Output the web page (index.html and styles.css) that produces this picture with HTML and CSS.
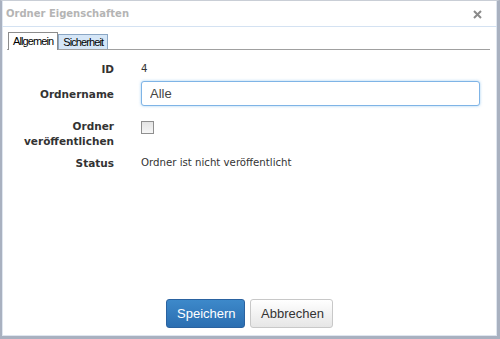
FILE: index.html
```html
<!DOCTYPE html>
<html lang="de">
<head>
    <meta charset="UTF-8">
    <meta name="viewport" content="width=device-width, initial-scale=1.0">
    <title>Ordner Eigenschaften</title>
    <link rel="stylesheet" href="styles.css">
</head>
<body>
    <div class="dialog">
        <div class="dialog-header">
            <span class="dialog-title">Ordner Eigenschaften</span>
            <span class="dialog-close">
                <svg width="9" height="9" viewBox="0 0 9 9">
                    <path d="M1 1 L8 8 M8 1 L1 8" stroke="#8a8a8a" stroke-width="2" fill="none"/>
                </svg>
            </span>
        </div>

        <div class="tabs">
            <div class="tab active">Allgemein</div>
            <div class="tab">Sicherheit</div>
        </div>

        <div class="form">
            <div class="form-row row-id">
                <label class="form-label">ID</label>
                <div class="form-value">4</div>
            </div>
            <div class="form-row row-name">
                <label class="form-label" for="name">Ordnername</label>
                <div class="form-value"><input type="text" id="name" class="text-input" value="Alle"></div>
            </div>
            <div class="form-row row-publish">
                <label class="form-label" for="publish">Ordner veröffentlichen</label>
                <div class="form-value"><input type="checkbox" id="publish" class="checkbox"></div>
            </div>
            <div class="form-row row-status">
                <label class="form-label">Status</label>
                <div class="form-value">Ordner ist nicht veröffentlicht</div>
            </div>
        </div>

        <div class="dialog-footer">
            <button class="btn btn-primary">Speichern</button>
            <button class="btn btn-default">Abbrechen</button>
        </div>
    </div>
</body>
</html>
```

FILE: styles.css
```css
html, body {
    margin: 0;
    padding: 0;
    background: #c9ced6;
}
.dialog {
    width: 500px;
    height: 339px;
    box-sizing: border-box;
    background: white;
    border-top: 1px solid #c9ced6;
    border-left: 2px solid #a9b1c0;
    border-right: 3px solid #a9b1c0;
    border-bottom: 3px solid #a9b1c0;
    box-shadow: inset 1px 0 0 #dfe6ef, inset -1px 0 0 #dfe6ef, inset 0 -1px 0 #dfe6ef;
    display: flex;
    flex-direction: column;
    font-family: "DejaVu Sans", Verdana, sans-serif;
    font-size: 10.2px;
    color: #333;
}
.dialog-header {
    height: 25px;
    display: flex;
    align-items: center;
    justify-content: space-between;
    padding: 0 15px 0 4px;
    border-bottom: 1px solid #d4e2f2;
}
.dialog-title {
    font-weight: bold;
    color: #b4b4b4;
    font-size: 10px;
}
.dialog-close {
    display: flex;
    margin-top: 1px;
}
.tabs {
    display: flex;
    align-items: flex-end;
    margin: 5px 7px 0 5px;
    padding-left: 1px;
    border-bottom: 1px solid #a0a0a0;
    height: 17px;
}
.tab {
    font-family: "Liberation Sans", Arial, sans-serif;
    font-size: 11px;
    letter-spacing: -0.9px;
    color: #000;
    height: 14px;
    line-height: 14px;
    padding: 0 4px;
    border: 1px solid #8aa6c4;
    border-bottom: none;
    background: #d5e6f7;
}
.tab.active {
    background: white;
    border-color: #8c8c8c;
    height: 16px;
    line-height: 17px;
    margin-bottom: -1px;
    padding: 0 4px 1px 4px;
}
.form {
    padding-top: 12px;
}
.form-row {
    display: flex;
    align-items: center;
}
.form-label {
    width: 112px;
    flex: none;
    text-align: right;
    font-weight: bold;
    font-size: 10.5px;
    line-height: 14px;
}
.form-value {
    margin-left: 27px;
    line-height: 14px;
}
.row-name {
    margin-top: 5px;
}
.row-name .form-value {
    flex: 1;
    margin-right: 17px;
}
.text-input {
    width: 100%;
    height: 25px;
    box-sizing: border-box;
    border: 1px solid #7fb4e6;
    border-radius: 3px;
    box-shadow: 0 0 3px rgba(102, 175, 233, 0.6);
    padding: 0 8px;
    font-family: "Liberation Sans", Arial, sans-serif;
    font-size: 13px;
    color: #444;
    outline: none;
}
.row-publish {
    margin-top: 13px;
    align-items: flex-start;
}
.row-publish .form-label {
    line-height: 15px;
}
.checkbox {
    appearance: none;
    -webkit-appearance: none;
    width: 13px;
    height: 13px;
    margin: 2px 0 0 0;
    border: 1px solid #8f8f8f;
    background: linear-gradient(#e4e4e4, #f6f6f6);
    box-sizing: border-box;
}
.row-status {
    margin-top: 7px;
}
.dialog-footer {
    margin-top: auto;
    display: flex;
    justify-content: center;
    gap: 5px;
    padding-bottom: 8px;
}
.btn {
    height: 29px;
    padding: 0 10px;
    border-radius: 3px;
    font-family: "Liberation Sans", Arial, sans-serif;
    font-size: 13px;
    cursor: pointer;
}
.btn-primary {
    background: linear-gradient(#3d89ca, #2b6eb1);
    border: 1px solid #2a62a0;
    color: white;
    width: 79px;
}
.btn-default {
    background: linear-gradient(#ffffff, #e6e6e6);
    border: 1px solid #c8c8c8;
    color: #333;
    width: 83px;
}
```
